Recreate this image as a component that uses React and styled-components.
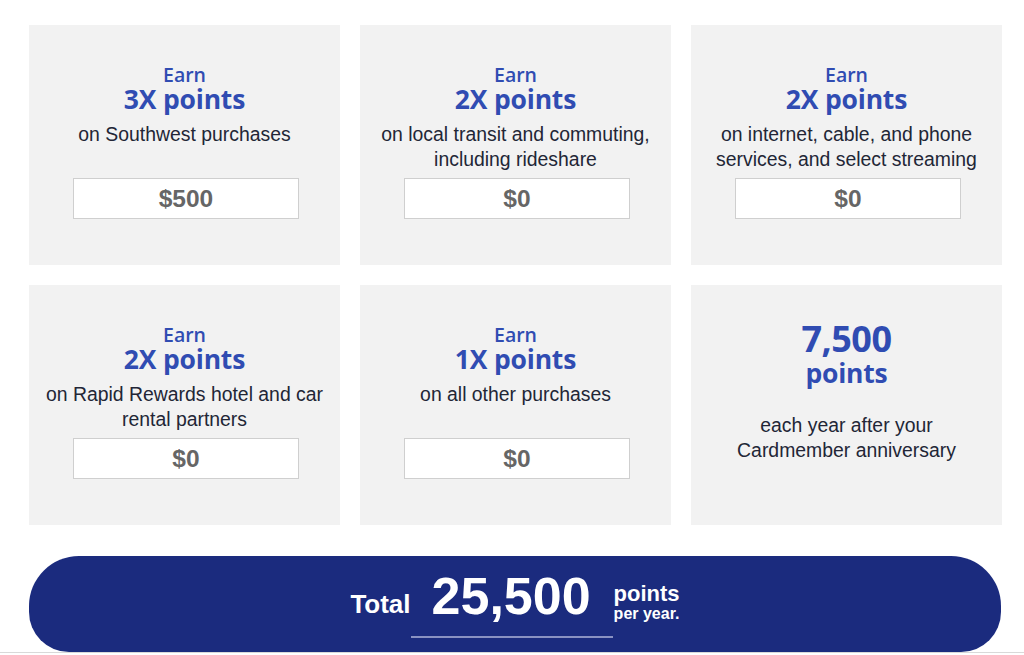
import React from "react";
import styled, { createGlobalStyle } from "styled-components";

const GlobalStyle = createGlobalStyle`
  html, body {
    margin: 0;
    padding: 0;
    background: #ffffff;
    font-family: "Liberation Sans", Arial, sans-serif;
    overflow: hidden;
  }
`;

const Page = styled.div`
  width: 1024px;
  height: 655px;
  overflow: hidden;
  position: relative;
`;

const Grid = styled.div`
  display: grid;
  grid-template-columns: repeat(3, 311px);
  grid-auto-rows: 240px;
  column-gap: 20px;
  row-gap: 20px;
  padding: 25px 0 0 29px;
`;

const Card = styled.div`
  background: #f2f2f2;
  display: flex;
  flex-direction: column;
  align-items: center;
  padding-top: ${(p) => p.$top || 40}px;
  box-sizing: border-box;
  text-align: center;
`;

const Earn = styled.div`
  font-family: "Open Sans", "Noto Sans", sans-serif;
  font-weight: 600;
  font-size: 19.5px;
  line-height: 20px;
  color: #304cb2;
`;

const Rate = styled.div`
  font-family: "Open Sans", "Noto Sans", sans-serif;
  font-weight: 700;
  font-size: 26.5px;
  line-height: 28px;
  color: #304cb2;
  letter-spacing: -0.2px;
`;

const BigNumber = styled.div`
  font-family: "Open Sans", "Noto Sans", sans-serif;
  font-weight: 700;
  font-size: 36px;
  line-height: 40px;
  color: #304cb2;
  letter-spacing: -0.5px;
`;

const Desc = styled.div`
  font-family: "Liberation Sans", Arial, sans-serif;
  font-size: 19.4px;
  line-height: 25px;
  color: #222636;
  margin-top: ${(p) => p.$gap || 9}px;
  min-height: ${(p) => (p.$fixed ? 50 : 0)}px;
  padding: 0 8px;
`;

const Amount = styled.div`
  width: 226px;
  height: 41px;
  box-sizing: border-box;
  margin: 6px 0 0 3px;
  background: #ffffff;
  border: 1px solid #cfcfcf;
  display: flex;
  align-items: center;
  justify-content: center;
  font-family: "Liberation Sans", Arial, sans-serif;
  font-weight: 700;
  font-size: 24.5px;
  color: #666666;
`;

const TotalBar = styled.div`
  margin: 31px 0 0 29px;
  width: 972px;
  height: 96px;
  background: #1b2b7e;
  border-radius: 50px 50px 40px 40px;
  display: flex;
  justify-content: center;
  color: #ffffff;
  font-family: "Liberation Sans", Arial, sans-serif;
  font-weight: 700;
`;

const TotalInner = styled.div`
  display: flex;
  align-items: flex-end;
  padding-top: 14px;
  height: 64px;
`;

const TotalLabel = styled.div`
  font-size: 26px;
  line-height: 26px;
  padding-bottom: 17px;
`;

const TotalNumber = styled.div`
  font-size: 52px;
  line-height: 56px;
  padding: 0 22px 0 21px;
  border-bottom: 2px solid #8a92c2;
  height: 68px;
  position: relative;
  top: 4px;
`;

const TotalUnit = styled.div`
  display: flex;
  flex-direction: column;
  padding-bottom: 11px;
  margin-left: 1px;
`;

const UnitMain = styled.span`
  font-size: 22px;
  line-height: 23px;
`;

const UnitSub = styled.span`
  font-size: 16px;
  line-height: 18px;
`;

const BottomRule = styled.div`
  position: absolute;
  left: 0;
  right: 0;
  top: 652px;
  height: 3px;
  background: #ffffff;
  border-top: 1px solid #d9d9d9;
`;

const offers = [
  { rate: "3X points", desc: "on Southwest purchases", amount: "$500" },
  { rate: "2X points", desc: "on local transit and commuting, including rideshare", amount: "$0" },
  { rate: "2X points", desc: "on internet, cable, and phone services, and select streaming", amount: "$0" },
  { rate: "2X points", desc: "on Rapid Rewards hotel and car rental partners", amount: "$0" },
  { rate: "1X points", desc: "on all other purchases", amount: "$0" },
];

const OfferCard = ({ rate, desc, amount }) => (
  <Card>
    <Earn>Earn</Earn>
    <Rate>{rate}</Rate>
    <Desc $fixed>{desc}</Desc>
    <Amount>{amount}</Amount>
  </Card>
);

const App = () => {
  return (
    <Page>
      <GlobalStyle />
      <Grid>
        {offers.map((o, i) => (
          <OfferCard key={i} {...o} />
        ))}
        <Card $top={34}>
          <BigNumber>7,500</BigNumber>
          <Rate>points</Rate>
          <Desc $gap={26}>
            each year after your
            <br />
            Cardmember anniversary
          </Desc>
        </Card>
      </Grid>
      <TotalBar>
        <TotalInner>
          <TotalLabel>Total</TotalLabel>
          <TotalNumber>25,500</TotalNumber>
          <TotalUnit>
            <UnitMain>points</UnitMain>
            <UnitSub>per year.</UnitSub>
          </TotalUnit>
        </TotalInner>
      </TotalBar>
      <BottomRule />
    </Page>
  );
};

export default App;
